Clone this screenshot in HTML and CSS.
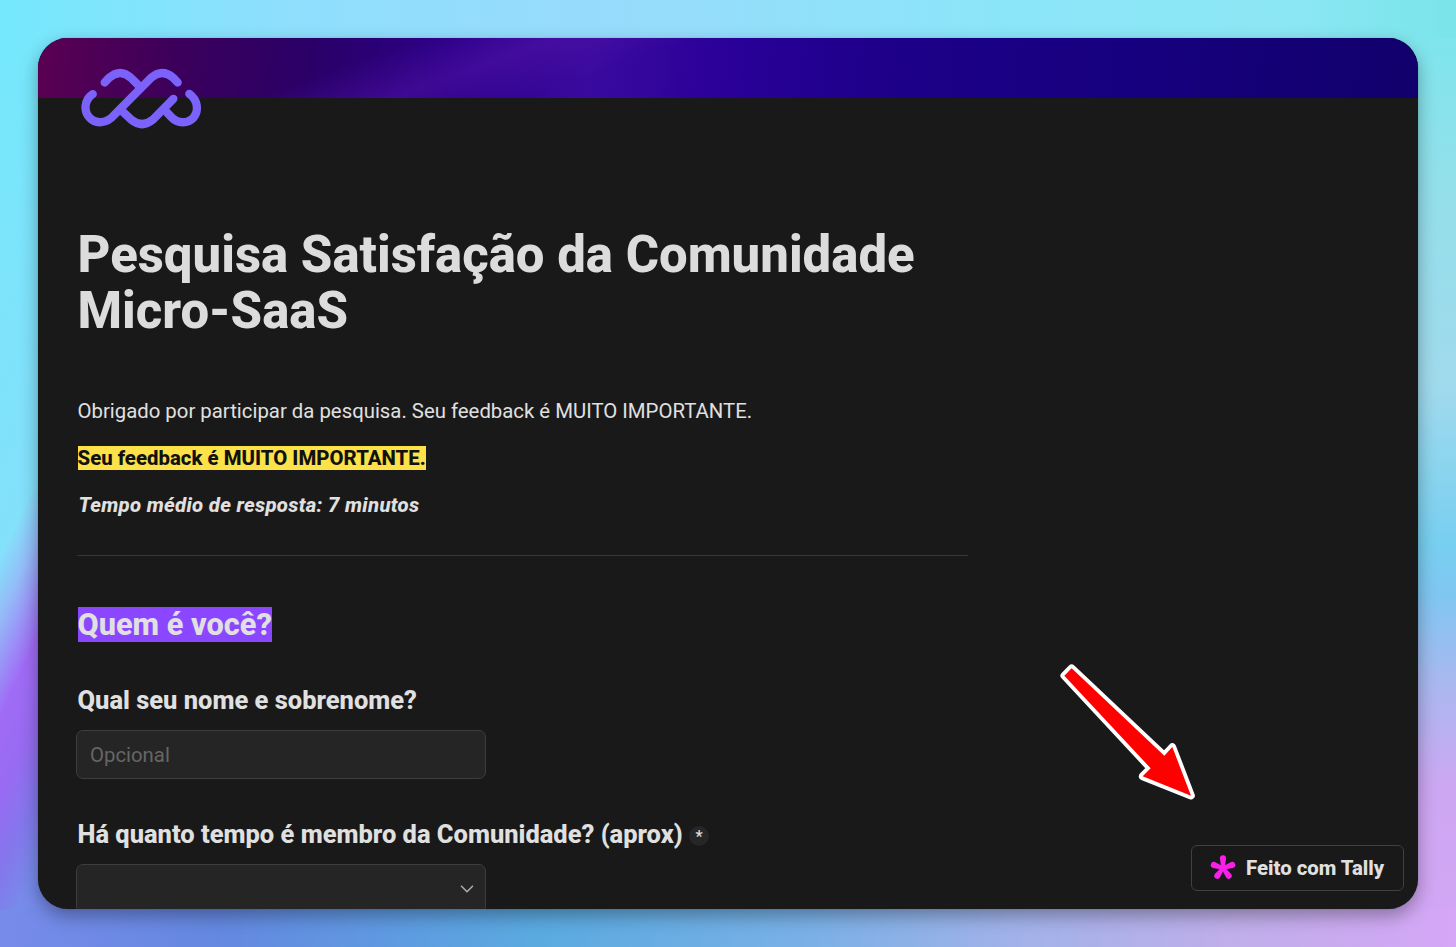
FILE: index.html
```html
<!DOCTYPE html>
<html lang="pt-BR">
<head>
    <meta charset="utf-8">
    <title>Pesquisa Satisfação da Comunidade Micro-SaaS</title>
    <link rel="stylesheet" href="styles.css">
</head>
<body>
    <main class="window">
        <div class="cover"></div>
        <form class="form">
            <svg class="logo" viewBox="54 45 384 200" fill="none" stroke="#7a62fa" stroke-width="25" stroke-linecap="round" stroke-linejoin="round">
                <path d="M134 97L147 83Q181 54 213 83L236 106"/>
                <path d="M353 97L340 83Q306 54 273 83L163 194C140 221 107 222 90 204C70 184 72 150 98 132"/>
                <path d="M190 186L214 209Q246 235 278 209L340 146"/>
                <path d="M320 186L334 201C353 221 383 221 400 203C418 182 413 149 388 131"/>
            </svg>

            <h1>Pesquisa Satisfação da Comunidade Micro-SaaS</h1>

            <p>Obrigado por participar da pesquisa. Seu feedback é MUITO IMPORTANTE.</p>
            <p><b class="yellow">Seu feedback é MUITO IMPORTANTE.</b></p>
            <p><b class="duration">Tempo médio de resposta: 7 minutos</b></p>
            <hr>

            <h2><span class="purple">Quem é você?</span></h2>

            <label for="name">Qual seu nome e sobrenome?</label>
            <input type="text" id="name" class="field" placeholder="Opcional">

            <label for="time">Há quanto tempo é membro da Comunidade? (aprox) <span class="required">*</span></label>
            <div class="field select" id="time">
                <svg width="14" height="8" viewBox="0 0 14 8" fill="none" stroke="#aaa" stroke-width="1.6" stroke-linecap="round" stroke-linejoin="round">
                    <path d="M1.5 1.2L7 6.7L12.5 1.2"/>
                </svg>
            </div>
        </form>

        <svg class="arrow" viewBox="0 0 540 480">
            <path d="M95 55L373 317L397 291L453 437L308 379L332 355L73 77Z"/>
        </svg>

        <a class="badge">
            <svg width="28" height="28" viewBox="-14 -14 28 28" fill="#f91fe9">
                <g id="petal"><path d="M-1.5 1L-3.1 -9.6A3.1 3.1 0 0 1 3.1 -9.6L1.5 1Z"/></g>
                <use href="#petal" transform="rotate(72)"/>
                <use href="#petal" transform="rotate(144)"/>
                <use href="#petal" transform="rotate(216)"/>
                <use href="#petal" transform="rotate(288)"/>
            </svg>
            Feito com Tally
        </a>
    </main>
</body>
</html>
```
FILE: styles.css
```css
* {
    box-sizing: border-box;
}

body {
    margin: 0;
    height: 947px;
    padding: 38px;
    overflow: hidden;
    font-family: Roboto, sans-serif;
    font-size: 20.35px;
    color: #e0e0e0;
    background:
        linear-gradient(90deg, #75e8fc, #8fdffd 20%, #98dbfc 42%, #8be5f9 68%, #8ce7f4 88%, #7ae4ea) 0 0 / 100% 38px no-repeat,
        linear-gradient(90deg, #778bea, #6488e0 15%, #5aaae0 37%, #78b0e6 55%, #a2b2e9 70%, #c0aeea 85%, #d5a6f6) 0 100% / 100% 38px no-repeat,
        linear-gradient(115deg, #75e8fc, #84e0fb 52%, #94bcf8 58%, #a06bf6 68%, #986bf2 76%, #8378ec 84%, #778bea 91%) 0 38px / 60px 871px no-repeat,
        linear-gradient(180deg, #7fe5ed, #94dfea 18%, #a0daed 40%, #78cff0 58%, #80c6f2 64%, #a9b8ef 74%, #cda7f2 86%, #d2a6f4) 100% 38px / 60px 871px no-repeat,
        #6e88d8;
}

.window {
    position: relative;
    height: 871px;
    overflow: hidden;
    border-radius: 30px;
    background: #191919;
    box-shadow: 0 7px 18px rgba(0, 0, 0, .33), 0 0 1px rgba(0, 0, 0, .4);
}

.cover {
    height: 60px;
    background:
        linear-gradient(160deg, transparent 34%, rgba(82, 18, 168, .5) 54%, transparent 74%) 150px 0 / 520px 60px no-repeat,
        linear-gradient(97deg, #5b0052, #3c005b 10%, #2a0068 20%, #2c0088 30%, #3a0a9e 40%, #2a0099 50%, #1d0088 62%, #170080 78%, #12006c);
}

.form {
    display: flex;
    flex-direction: column;
    align-items: flex-start;
    width: 940px;
    padding-left: 39.5px;
}

.logo {
    width: 128px;
    height: 67px;
    margin: -33px 0 0 .5px;
}

h1 {
    margin: 94.5px 0 0;
    font-size: 50.9px;
    line-height: 56px;
    font-weight: 800;
    color: #dcdcdc;
}

p {
    margin: 0;
    line-height: 31px;
}

h1 + p {
    margin-top: 57.5px;
}

p + p {
    margin-top: 16px;
}

b {
    font-weight: 800;
}

.yellow {
    color: #111;
    background: #fce148;
    letter-spacing: .02px;
}

.duration {
    font-style: oblique;
    margin-left: 1px;
    letter-spacing: .3px;
}

hr {
    width: 891px;
    margin: 34px 0 0 -.5px;
    border: 0;
    border-top: 1px solid #373737;
}

h2 {
    margin: 50px 0 0;
    font-size: 30.7px;
    font-weight: 800;
    line-height: 38px;
}

.purple {
    background: #8b46ff;
}

label {
    margin-top: 40px;
    font-size: 25.47px;
    font-weight: 800;
    line-height: 32px;
}

.field + label {
    margin-top: 39px;
}

.required {
    display: inline-block;
    width: 20px;
    height: 20px;
    border-radius: 50%;
    background: #262626;
    font-size: 16px;
    font-weight: 500;
    line-height: 22px;
    text-align: center;
    vertical-align: 1px;
}

.field {
    width: 410px;
    height: 49px;
    margin: 14px 0 0 -1.5px;
    padding: 0 13px;
    border: 1px solid #3d3d3d;
    border-radius: 7px;
    background: #252525;
    color: inherit;
    font: inherit;
}

.field::placeholder {
    color: #666;
}

.select {
    display: flex;
    align-items: center;
    justify-content: flex-end;
    padding: 0 11px;
}

.arrow {
    position: absolute;
    left: 1002px;
    top: 612px;
    width: 180px;
    height: 160px;
}

.arrow path {
    fill: #f00;
    stroke: #fff;
    stroke-width: 23;
    stroke-linejoin: round;
    paint-order: stroke;
}

.badge {
    position: absolute;
    right: 14px;
    bottom: 18px;
    display: flex;
    align-items: center;
    gap: 9px;
    width: 213px;
    height: 46px;
    padding-left: 17px;
    border: 1px solid #404040;
    border-radius: 6px;
    background: #191919;
    font-weight: 800;
    white-space: nowrap;
}
```
